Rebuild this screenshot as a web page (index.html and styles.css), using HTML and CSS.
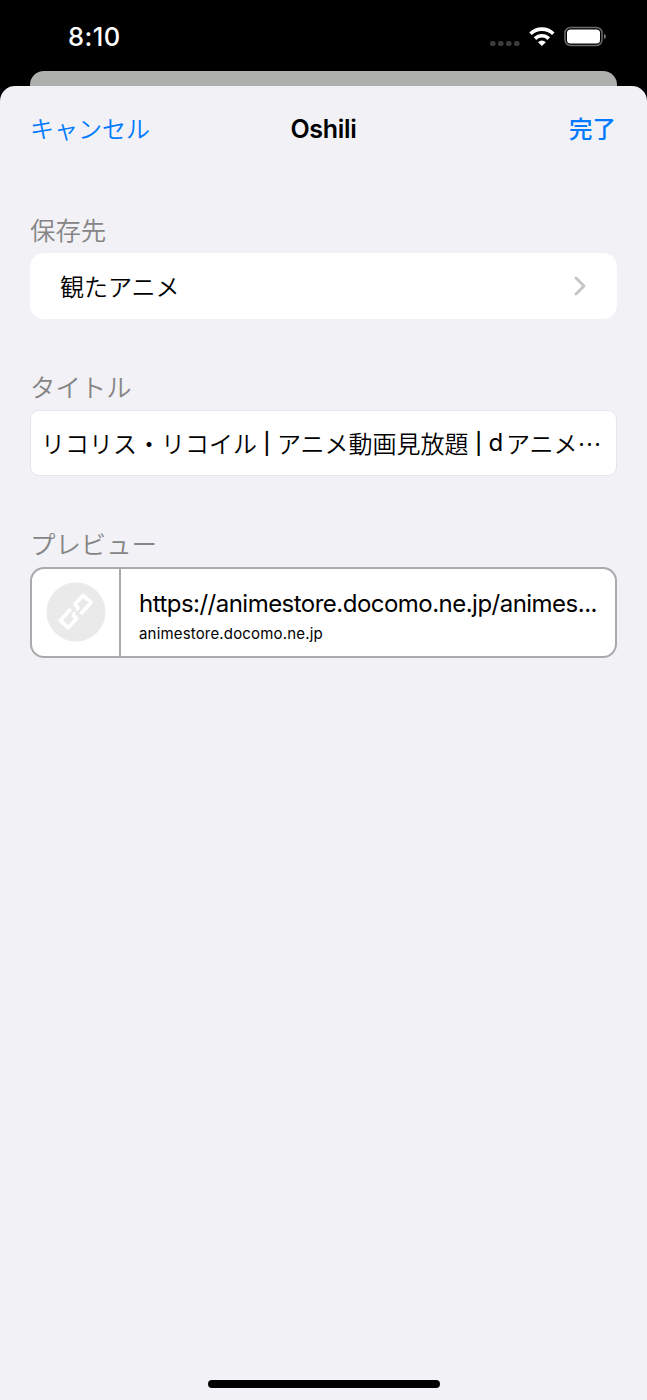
FILE: index.html
```
<!DOCTYPE html>
<html lang="ja">
<head>
<meta charset="utf-8">
<title>Oshili</title>
<link rel="stylesheet" href="styles.css">
</head>
<body>
<header class="status">
  <span class="time">8:10</span>
  <svg class="status-icons" width="118" height="24" viewBox="0 0 118 24">
    <g fill="#3b3b3b"><rect x="2" y="16" width="5.5" height="5" rx="1.8"/><rect x="10" y="16" width="5.5" height="5" rx="1.8"/><rect x="18" y="16" width="5.5" height="5" rx="1.8"/><rect x="26" y="16" width="5.5" height="5" rx="1.8"/></g>
    <g fill="none" stroke="#fff" stroke-width="3.6"><path d="M42.5 8.800a16.2 16.2 0 0 1 22.8 0"/><path d="M47 13.600a9.8 9.8 0 0 1 13.8 0"/></g>
    <path fill="#fff" d="M50 17.2a5.6 5.6 0 0 1 7.8 0L53.9 21z"/>
    <rect x="77" y="2.500" width="37" height="18" rx="5.5" fill="none" stroke="#6b6b6b" stroke-width="1.5"/>
    <rect x="79" y="4.500" width="33" height="14" rx="3.5" fill="#fff"/>
    <path fill="#777" d="M116 9q2 .8 2 2.500t-2 2.500z"/>
  </svg>
</header>
<div class="behind"></div>
<main class="sheet">
  <nav class="nav">
    <span class="cancel">キャンセル</span>
    <h1 class="heading">Oshili</h1>
    <span class="done">完了</span>
  </nav>
  <section class="group">
    <h2 class="label">保存先</h2>
    <div class="picker">
      <span>観たアニメ</span>
      <svg width="14" height="20" viewBox="0 0 14 20"><path d="M3 2l8 8-8 8" fill="none" stroke="#c4c4c7" stroke-width="2.8" stroke-linecap="round" stroke-linejoin="round"/></svg>
    </div>
  </section>
  <section class="group">
    <h2 class="label">タイトル</h2>
    <div class="field">リコリス・リコイル<span class="bar">|</span>アニメ動画見放題<span class="bar">|</span><span class="latin">d</span>アニメ…</div>
  </section>
  <section class="group">
    <h2 class="label">プレビュー</h2>
    <div class="preview">
      <div class="thumb">
        <svg width="60" height="60" viewBox="0 0 60 60">
          <circle cx="30" cy="30" r="29.500" fill="#eaeaea"/>
          <g transform="translate(29.700 29.500) rotate(-48)" fill="none" stroke="#fff" stroke-width="3.700" stroke-linejoin="round"><path d="M4.500 0V-5.300H17V5.300H1.500"/><path d="M-4.500 0V5.300H-17V-5.300H-1.500"/><path d="M-5 0H-1M1 0H5" stroke-width="2.500"/></g>
        </svg>
      </div>
      <div class="link">
        <p class="url">https://animestore.docomo.ne.jp/animes...</p>
        <p class="host">animestore.docomo.ne.jp</p>
      </div>
    </div>
  </section>
  <div class="home"></div>
</main>
</body>
</html>
```
FILE: styles.css
```
* { box-sizing: border-box; margin: 0; }
body {
  display: flex;
  flex-direction: column;
  height: 1400px;
  background: #000;
  color: #000;
  font-family: Inter, "Noto Sans CJK JP", sans-serif;
  font-size: 24px;
  font-weight: 400;
}
.status {
  height: 71px;
  padding: 25px 29px 0 68px;
  display: flex;
  justify-content: space-between;
}
.time { color: #fff; font-size: 25.500px; line-height: 24px; font-weight: 550; letter-spacing: .5px; }
.status-icons { margin-right: 12px; }
.behind { height: 15px; margin: 0 30px; background: #aeb0ad; border-radius: 14px 14px 0 0; }
.sheet {
  flex: 1;
  display: flex;
  flex-direction: column;
  padding: 0 30px 12px;
  background: #f2f1f6;
  border-radius: 15px 15px 0 0;
}
.nav {
  display: grid;
  grid-template-columns: 1fr auto 1fr;
  align-items: center;
  height: 84px;
  margin-bottom: 44px;
  color: #007aff;
  line-height: 36px;
}
.cancel { padding-bottom: 1px; font-family: "Noto Sans CJK JP", sans-serif; font-weight: 350; }
.heading { padding-top: 1px; color: #000; font-size: 25px; font-weight: 600; letter-spacing: -.3px; }
.done { padding: 0 1px 1px 0; text-align: right; font-family: "Noto Sans CJK JP", sans-serif; font-weight: 500; font-size: 23.500px; }
.group { margin-bottom: 52px; }
.label {
  height: 38.500px;
  line-height: 30px;
  font-family: "Noto Sans CJK JP", sans-serif;
  font-size: 25.400px;
  font-weight: 350;
  color: #858585;
}
.picker, .field { display: flex; align-items: center; height: 66.500px; background: #fff; font-family: "Noto Sans CJK JP", sans-serif; font-weight: 350; }
.picker { justify-content: space-between; padding: 0 30px; border-radius: 14px; }
.picker span { padding-bottom: 1px; }
.field { padding: 0 10px 1px; border: 1px solid #e6e6ea; border-radius: 9px; white-space: pre; }
.bar { width: 20px; padding-top: 3px; text-align: center; font-family: Inter, sans-serif; font-size: 21px; font-weight: 500; }
.latin { width: 17.500px; padding-top: 1px; font-family: Inter, sans-serif; font-weight: 400; }
.preview { display: flex; height: 90.500px; margin-top: .5px; border: 2px solid #aaaaac; border-radius: 14px; background: #fff; }
.thumb { display: flex; flex: none; align-items: center; justify-content: center; width: 89px; padding-left: 1px; border-right: 2px solid #aaaaac; }
.link { padding: 19px 0 0 18px; white-space: nowrap; }
.url { font-size: 24px; line-height: 32px; letter-spacing: -.52px; }
.host { font-size: 15px; line-height: 28px; letter-spacing: .17px; }
.home { width: 232px; height: 8px; margin: auto auto 0; border-radius: 4px; background: #000; }
```
